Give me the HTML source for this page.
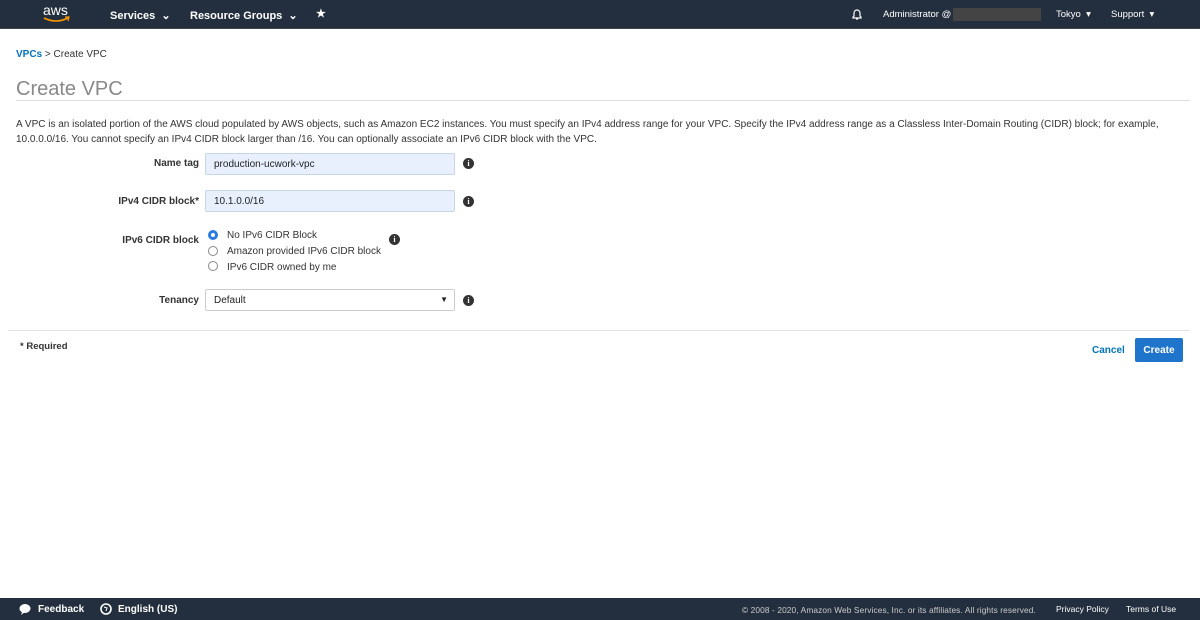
<!DOCTYPE html>
<html><head><meta charset="utf-8"><style>
*{box-sizing:border-box;margin:0;padding:0}
body{width:1200px;height:620px;position:relative;background:#fff;font-family:"Liberation Sans",Arial,sans-serif;color:#333;overflow:hidden}
.top{position:absolute;left:0;top:0;width:1200px;height:29px;background:#232f3e;border-bottom:1px solid #444;color:#fff;font-size:11px}
.top span{position:absolute;top:9px;font-weight:bold}
.foot{position:absolute;left:0;top:598px;width:1200px;height:22px;background:#232f3e;color:#fff;font-size:10px}
.foot span{position:absolute;top:6px}
.abs{position:absolute}
.lbl{position:absolute;font-size:10px;font-weight:bold;text-align:right;width:100px;color:#333}
.inp{position:absolute;left:205px;width:250px;height:22px;border:1px solid #c9d6e8;background:#e8f0fe;border-radius:2px;font-size:10px;padding:5px 8px;color:#222}
.info{position:absolute;width:11px;height:11px;border-radius:50%;background:#333;color:#fff;font-size:8px;font-weight:bold;text-align:center;line-height:11px;font-family:"Liberation Serif",serif}
.radio{position:absolute;left:208px;width:10px;height:10px;border-radius:50%;border:1px solid #888;background:#fff}
.rt{position:absolute;left:227px;font-size:10px;color:#333}
</style></head><body>
<div class="top">
 <div class="abs" style="left:43px;top:2px;font-size:14px;color:#fff;letter-spacing:0">aws</div>
 <svg class="abs" style="left:42px;top:16px" width="30" height="8"><path d="M2 2 Q14 8 26 2" stroke="#f90" stroke-width="1.6" fill="none"/><path d="M23 1 L27 1 L26 5" stroke="#f90" stroke-width="1.2" fill="none"/></svg>
 <span style="left:110px">Services &nbsp;⌄</span>
 <span style="left:190px">Resource Groups &nbsp;⌄</span>
 <span style="left:316px;top:7px">★</span>
 <svg class="abs" style="left:851px;top:8px" width="12" height="13"><path d="M2 10 L2 9 L3 8 V5 A3 3 0 0 1 9 5 V8 L10 9 V10 Z M5 11 H7" stroke="#fff" stroke-width="1.2" fill="none"/></svg>
 <span style="left:883px;font-weight:normal;font-size:9.5px">Administrator @</span>
 <div class="abs" style="left:953px;top:8px;width:88px;height:13px;background:#444"></div>
 <span style="left:1056px;font-weight:normal;font-size:9.5px">Tokyo &nbsp;▾</span>
 <span style="left:1111px;font-weight:normal;font-size:9.5px">Support &nbsp;▾</span>
</div>
<div class="abs" style="left:16px;top:49px;font-size:10px"><b style="color:#0073bb">VPCs</b> &gt; Create VPC</div>
<div class="abs" style="left:16px;top:78px;font-size:20px;color:#888">Create VPC</div>
<div class="abs" style="left:16px;top:100px;width:1174px;height:1px;background:#ddd"></div>
<div class="abs" style="left:16px;top:117px;width:1170px;font-size:10px;line-height:15px;color:#333">A VPC is an isolated portion of the AWS cloud populated by AWS objects, such as Amazon EC2 instances. You must specify an IPv4 address range for your VPC. Specify the IPv4 address range as a Classless Inter-Domain Routing (CIDR) block; for example, 10.0.0.0/16. You cannot specify an IPv4 CIDR block larger than /16. You can optionally associate an IPv6 CIDR block with the VPC.</div>
<div class="lbl" style="left:99px;top:158px">Name tag</div>
<div class="inp" style="top:153px">production-ucwork-vpc</div><div class="info" style="left:463px;top:158px">i</div>
<div class="lbl" style="left:99px;top:196px">IPv4 CIDR block*</div>
<div class="inp" style="top:190px">10.1.0.0/16</div><div class="info" style="left:463px;top:196px">i</div>
<div class="lbl" style="left:99px;top:235px">IPv6 CIDR block</div>
<div class="radio" style="top:230px;border:3px solid #2a7ae2"></div><div class="rt" style="top:230px">No IPv6 CIDR Block</div>
<div class="radio" style="top:246px"></div><div class="rt" style="top:246px">Amazon provided IPv6 CIDR block</div>
<div class="radio" style="top:261px"></div><div class="rt" style="top:262px">IPv6 CIDR owned by me</div>
<div class="info" style="left:389px;top:234px">i</div>
<div class="lbl" style="left:99px;top:295px">Tenancy</div>
<div class="inp" style="top:289px;background:#fff;border-color:#ccc">Default<span style="position:absolute;right:6px;top:5px;font-size:8px">▼</span></div><div class="info" style="left:463px;top:295px">i</div>
<div class="abs" style="left:8px;top:330px;width:1182px;height:1px;background:#e3e3e3"></div>
<div class="abs" style="left:20px;top:341px;font-size:9.5px;font-weight:bold">* Required</div>
<div class="abs" style="left:1092px;top:345px;font-size:10px;font-weight:bold;color:#0073bb">Cancel</div>
<div class="abs" style="left:1135px;top:338px;width:48px;height:24px;background:#1f75cb;border-radius:2px;color:#fff;font-size:10px;font-weight:bold;text-align:center;padding-top:7px;line-height:11px">Create</div>
<div class="foot">
 <svg class="abs" style="left:19px;top:5px" width="12" height="12"><ellipse cx="6" cy="5.5" rx="5.5" ry="4.5" fill="#fff"/><path d="M3 9 L2 12 L6 9Z" fill="#fff"/></svg>
 <span style="left:38px;font-weight:bold">Feedback</span>
 <svg class="abs" style="left:100px;top:5px" width="12" height="12"><circle cx="6" cy="6" r="5" stroke="#fff" stroke-width="1.6" fill="none"/><path d="M4 4 L7 5 L6 8" stroke="#fff" fill="none"/></svg>
 <span style="left:118px;font-weight:bold">English (US)</span>
 <span style="left:742px;font-size:8.3px;top:7px;color:#ccc;letter-spacing:0.12px">© 2008 - 2020, Amazon Web Services, Inc. or its affiliates. All rights reserved.</span>
 <span style="left:1056px;font-size:8.5px;top:6px">Privacy Policy</span>
 <span style="left:1126px;font-size:8.5px;top:6px">Terms of Use</span>
</div>
</body></html>
